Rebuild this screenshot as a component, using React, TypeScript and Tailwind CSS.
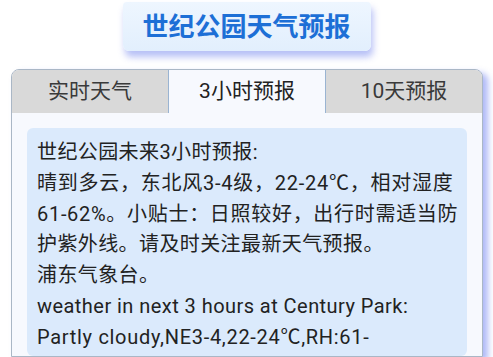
import React from "react";

type L = { t: string; c?: string };

export default function App() {
  const lines: L[] = [
    { t: "世纪公园未来3小时预报:" },
    { t: "晴到多云，东北风3-4级，22-24℃，相对湿度", c: "tracking-[0.75px]" },
    { t: "61-62%。小贴士：日照较好，出行时需适当防", c: "tracking-[0.7px]" },
    { t: "护紫外线。请及时关注最新天气预报。" },
    { t: "浦东气象台。" },
    { t: "weather in next 3 hours at Century Park:", c: "tracking-[0.45px]" },
    { t: "Partly cloudy,NE3-4,22-24℃,RH:61-", c: "tracking-[0.7px]" },
  ];
  const font = { fontFamily: '"Roboto", "Noto Sans CJK SC", sans-serif' };
  return (
    <div
      lang="zh-CN"
      className="w-[493px] h-[357px] overflow-hidden bg-white flex flex-col items-center"
      style={font}
    >
      <div className="shrink-0 mt-[2px] w-[248px] h-[49px] rounded-b-[6px] rounded-t-[4px] bg-gradient-to-b from-[#eef6ff] to-[#e2effd] shadow-[2px_6px_7px_rgba(95,115,235,0.45)] flex items-center justify-center">
        <span className="text-[26px] font-bold text-[#1d6fd6] leading-none">
          世纪公园天气预报
        </span>
      </div>
      <div className="mt-[18px] w-[472px] flex-1 self-start ml-[11px] border border-[#aab7c6] rounded-t-[8px] bg-[#f7f9fe] shadow-[5px_4px_6px_rgba(95,115,240,0.5)] overflow-hidden flex flex-col">
        <div className="flex shrink-0 h-[43px]">
          <div className="flex-1 bg-[#d9d9d9] flex items-center justify-center text-[21px] text-[#3a3a3a]">
            实时天气
          </div>
          <div className="flex-1 bg-[#f7f9fe] border-x border-[#9ab4d2] flex items-center justify-center text-[21px] text-[#222]">
            3小时预报
          </div>
          <div className="flex-1 bg-[#d9d9d9] flex items-center justify-center text-[21px] text-[#3a3a3a]">
            10天预报
          </div>
        </div>
        <div className="mt-[15px] mx-[15px] flex-1 rounded-[6px] bg-[#dbeafc] pt-[9px] pl-[10px]">
          {lines.map((l, i) => (
            <div
              key={i}
              className={`whitespace-nowrap text-[20px] leading-[30.8px] text-[#222] ${
                l.c ?? "tracking-[0.4px]"
              }`}
            >
              {l.t}
            </div>
          ))}
        </div>
      </div>
    </div>
  );
}
